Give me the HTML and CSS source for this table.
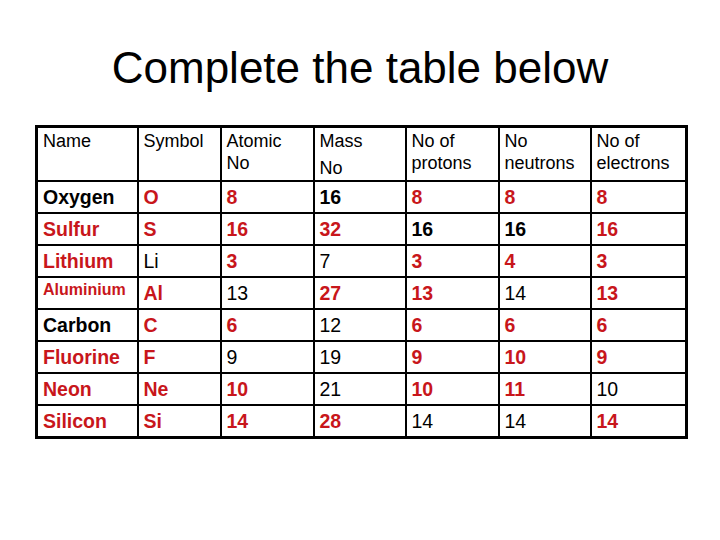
FILE: index.html
```html
<!DOCTYPE html>
<html>
<head>
<meta charset="utf-8">
<link rel="stylesheet" href="styles.css">
</head>
<body>
<h1 class="title">Complete the table below</h1>
<table class="grid">
  <colgroup>
    <col class="c1"><col class="c2"><col class="c3"><col class="c4"><col class="c5"><col class="c6"><col class="c7">
  </colgroup>
  <tr class="head">
    <td>Name</td>
    <td>Symbol</td>
    <td>Atomic<br>No</td>
    <td>Mass<span class="gap">No</span></td>
    <td>No of<br>protons</td>
    <td>No<br>neutrons</td>
    <td>No of<br>electrons</td>
  </tr>
  <tr>
    <td class="kb">Oxygen</td><td class="r">O</td><td class="r">8</td><td class="kb">16</td><td class="r">8</td><td class="r">8</td><td class="r">8</td>
  </tr>
  <tr>
    <td class="r">Sulfur</td><td class="r">S</td><td class="r">16</td><td class="r">32</td><td class="kb">16</td><td class="kb">16</td><td class="r">16</td>
  </tr>
  <tr>
    <td class="r">Lithium</td><td class="k">Li</td><td class="r">3</td><td class="k">7</td><td class="r">3</td><td class="r">4</td><td class="r">3</td>
  </tr>
  <tr>
    <td class="r small">Aluminium</td><td class="r">Al</td><td class="k">13</td><td class="r">27</td><td class="r">13</td><td class="k">14</td><td class="r">13</td>
  </tr>
  <tr>
    <td class="kb">Carbon</td><td class="r">C</td><td class="r">6</td><td class="k">12</td><td class="r">6</td><td class="r">6</td><td class="r">6</td>
  </tr>
  <tr>
    <td class="r">Fluorine</td><td class="r">F</td><td class="k">9</td><td class="k">19</td><td class="r">9</td><td class="r">10</td><td class="r">9</td>
  </tr>
  <tr>
    <td class="r">Neon</td><td class="r">Ne</td><td class="r">10</td><td class="k">21</td><td class="r">10</td><td class="r">11</td><td class="k">10</td>
  </tr>
  <tr>
    <td class="r">Silicon</td><td class="r">Si</td><td class="r">14</td><td class="r">28</td><td class="k">14</td><td class="k">14</td><td class="r">14</td>
  </tr>
</table>
</body>
</html>
```
FILE: styles.css
```css
html, body {
  margin: 0;
  padding: 0;
  background: #ffffff;
}
body {
  font-family: "Liberation Sans", Arial, sans-serif;
  color: #000000;
  width: 720px;
  height: 540px;
  overflow: hidden;
}
.title {
  margin: 0;
  padding-top: 43px;
  height: 125px;
  box-sizing: border-box;
  text-align: center;
  font-weight: normal;
  font-size: 44px;
  line-height: 50px;
}
.grid {
  margin-left: 35px;
  margin-top: 0;
  border-collapse: collapse;
  border: 3px solid #000;
  table-layout: fixed;
  width: 652px;
}
.grid td {
  border: 2px solid #000;
  padding: 0 0 0 5px;
  height: 30px;
  vertical-align: middle;
  font-size: 19.5px;
  line-height: 22px;
  white-space: nowrap;
  overflow: hidden;
}
.c1 { width: 101px; }
.c2 { width: 83px; }
.c3 { width: 93px; }
.c4 { width: 92px; }
.c5 { width: 93px; }
.c6 { width: 92px; }
.c7 { width: 96px; }
.grid .head td {
  height: 50px;
  vertical-align: top;
  font-size: 18px;
  line-height: 22px;
  padding-top: 2px;
  font-weight: normal;
}
.gap {
  display: block;
  margin-top: 5px;
}
.grid td.r {
  color: #c8161b;
  font-weight: bold;
}
.grid td.kb {
  color: #000;
  font-weight: bold;
}
.grid td.k {
  color: #000;
  font-weight: normal;
}
.grid td.small {
  font-size: 16px;
  line-height: 18px;
  height: 24px;
  padding-bottom: 6px;
}
```
